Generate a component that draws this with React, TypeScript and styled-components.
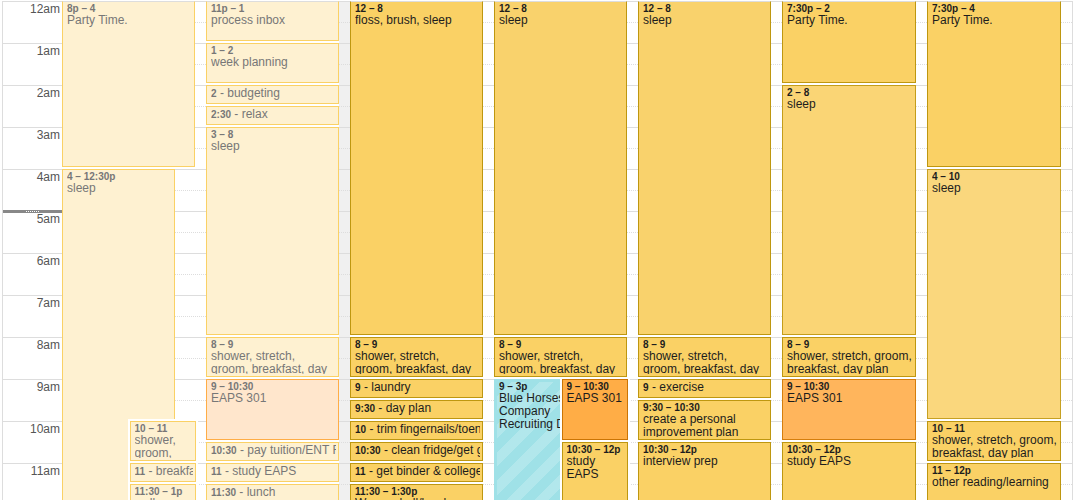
import React from "react";
import styled, { createGlobalStyle, css } from "styled-components";

const GlobalStyle = createGlobalStyle`
  *, *::before, *::after { box-sizing: border-box; }
  html, body, #root { height: 100%; }
  body {
    margin: 0;
    background: #fff;
    font-family: Arial, "Liberation Sans", sans-serif;
    overflow: hidden;
  }
`;

const HALF_HOUR = 21;
const HALF_HOURS_SHOWN = 24;

type Tone = "gold" | "goldSoft" | "goldPale" | "goldLight" | "orange" | "orangeSoft" | "cyan" | "pastGold" | "pastOrange";

const tones: Record<Tone, { fill: string; edge: string; text: string }> = {
  gold: { fill: "#fad165", edge: "#be9710", text: "#1d1d1d" },
  goldSoft: { fill: "#f9d26c", edge: "#be9710", text: "#1d1d1d" },
  goldLight: { fill: "#fad575", edge: "#c49d1a", text: "#1d1d1d" },
  goldPale: { fill: "#fad77d", edge: "#c7a122", text: "#1d1d1d" },
  orange: { fill: "#ffad46", edge: "#cb7403", text: "#1d1d1d" },
  orangeSoft: { fill: "#ffb55c", edge: "#d57e0d", text: "#1d1d1d" },
  cyan: { fill: "#9fe1e7", edge: "#9fe1e7", text: "#1d1d1d" },
  pastGold: { fill: "#fef1d1", edge: "#fad165", text: "#777" },
  pastOrange: { fill: "#ffe6cc", edge: "#ffad46", text: "#777" },
};

type Lane = "full" | "wide" | "left" | "right";

interface CalendarEvent {
  /** Half-hours since midnight. */
  start: number;
  end: number;
  time: string;
  title: string;
  tone: Tone;
  lane?: Lane;
}

const Calendar = styled.main`
  display: grid;
  grid-template-columns: 60px 1fr;
  height: 100%;
  padding: 1px 1px 0 2px;
  overflow: hidden;
`;

const Gutter = styled.ol`
  position: relative;
  margin: 0;
  padding: 0;
  list-style: none;
  border-left: 1px solid #ddd;
`;

const HourLabel = styled.li`
  height: ${HALF_HOUR * 2}px;
  padding-right: 2px;
  border-top: 1px solid #ddd;
  color: #555;
  font-size: 12px;
  line-height: 14px;
  text-align: right;
`;

const NowMarker = styled.div`
  position: absolute;
  top: ${HALF_HOUR * 10 - 1}px;
  left: 0;
  right: 0;
  height: 3px;
  display: flex;
  align-items: center;
  justify-content: center;
  background: #888;
`;

const Grip = styled.span`
  width: 13px;
  border-top: 1px dotted #fff;
`;

const Week = styled.div`
  display: grid;
  grid-template-columns: repeat(5, 144fr) repeat(2, 145fr);
  border-right: 1px solid #ddd;
`;

const Day = styled.section<{ $today?: boolean }>`
  display: grid;
  grid-template-columns: minmax(0, 1fr) minmax(0, 1fr) 11px;
  grid-template-rows: repeat(${HALF_HOURS_SHOWN}, ${HALF_HOUR}px);
  min-width: 0;
  background: ${(p) => (p.$today ? "#f0f0f0" : "#fff")};
  box-shadow: inset 1px 0 #ddd;
`;

const Slot = styled.div<{ $row: number }>`
  grid-column: 1 / -1;
  grid-row: ${(p) => p.$row};
  border-top: 1px ${(p) => (p.$row % 2 ? "solid" : "dotted")} #ddd;
`;

const lanes = {
  full: css`
    grid-column: 1 / 3;
  `,
  wide: css`
    grid-column: 1 / 3;
    width: 85%;
  `,
  left: css`
    grid-column: 1;
    padding-right: 0;
  `,
  right: css`
    grid-column: 2;
    margin-left: 1px;
    margin-right: -1px;
    box-shadow: 0 0 0 2px #fff;
  `,
};

const EventCard = styled.article<{ $start: number; $end: number; $tone: Tone; $lane: Lane }>`
  grid-row: ${(p) => p.$start + 1} / ${(p) => p.$end + 1};
  z-index: 1;
  min-width: 0;
  margin-bottom: 2px;
  padding: 0 2px 2px 4px;
  overflow: hidden;
  border: 1px solid ${(p) => tones[p.$tone].edge};
  border-top-color: ${(p) => (p.$start === 0 ? "#ddd" : tones[p.$tone].edge)};
  background: ${(p) => tones[p.$tone].fill};
  box-shadow: 0 2px #fff;
  color: ${(p) => tones[p.$tone].text};
  ${(p) => lanes[p.$lane]}
  ${(p) =>
    p.$tone === "cyan" &&
    css`
      background: repeating-linear-gradient(
          135deg,
          transparent 0 10px,
          rgba(255, 255, 255, 0.2) 10px 20px
        )
        2px 2px no-repeat #9fe1e7;
    `}
`;

const Clip = styled.div`
  height: 100%;
  overflow: hidden;
`;

const Time = styled.h3`
  margin: 0;
  font-size: 10px;
  line-height: 11px;
  padding-top: 1px;
  white-space: nowrap;
`;

const Title = styled.p`
  margin: 0;
  padding-right: 1px;
  font-size: 12px;
  line-height: 13px;
`;

const ShortLine = styled.p`
  margin: 0;
  font-size: 12px;
  line-height: 14px;
  white-space: nowrap;
  overflow: hidden;

  b {
    font-size: 10px;
  }
`;

const days: CalendarEvent[][] = [
  [
    { start: 0, end: 8, time: "8p – 4", title: "Party Time.", tone: "pastGold" },
    { start: 8, end: 25, time: "4 – 12:30p", title: "sleep", tone: "pastGold", lane: "wide" },
    { start: 20, end: 22, time: "10 – 11", title: "shower, groom,", tone: "pastGold", lane: "right" },
    { start: 22, end: 23, time: "11", title: "breakfast", tone: "pastGold", lane: "right" },
    { start: 23, end: 26, time: "11:30 – 1p", title: "walk", tone: "pastGold", lane: "right" },
  ],
  [
    { start: 0, end: 2, time: "11p – 1", title: "process inbox", tone: "pastGold" },
    { start: 2, end: 4, time: "1 – 2", title: "week planning", tone: "pastGold" },
    { start: 4, end: 5, time: "2", title: "budgeting", tone: "pastGold" },
    { start: 5, end: 6, time: "2:30", title: "relax", tone: "pastGold" },
    { start: 6, end: 16, time: "3 – 8", title: "sleep", tone: "pastGold" },
    { start: 16, end: 18, time: "8 – 9", title: "shower, stretch, groom, breakfast, day plan", tone: "pastGold" },
    { start: 18, end: 21, time: "9 – 10:30", title: "EAPS 301", tone: "pastOrange" },
    { start: 21, end: 22, time: "10:30", title: "pay tuition/ENT Fee", tone: "pastGold" },
    { start: 22, end: 23, time: "11", title: "study EAPS", tone: "pastGold" },
    { start: 23, end: 24, time: "11:30", title: "lunch", tone: "pastGold" },
  ],
  [
    { start: 0, end: 16, time: "12 – 8", title: "floss, brush, sleep", tone: "gold" },
    { start: 16, end: 18, time: "8 – 9", title: "shower, stretch, groom, breakfast, day plan", tone: "gold" },
    { start: 18, end: 19, time: "9", title: "laundry", tone: "gold" },
    { start: 19, end: 20, time: "9:30", title: "day plan", tone: "gold" },
    { start: 20, end: 21, time: "10", title: "trim fingernails/toenails", tone: "gold" },
    { start: 21, end: 22, time: "10:30", title: "clean fridge/get groceries", tone: "gold" },
    { start: 22, end: 23, time: "11", title: "get binder & college", tone: "gold" },
    { start: 23, end: 27, time: "11:30 – 1:30p", title: "Women hall/lunch", tone: "gold" },
  ],
  [
    { start: 0, end: 16, time: "12 – 8", title: "sleep", tone: "goldSoft" },
    { start: 16, end: 18, time: "8 – 9", title: "shower, stretch, groom, breakfast, day plan", tone: "gold" },
    { start: 18, end: 30, time: "9 – 3p", title: "Blue\u00a0Horses Company Recruiting\u00a0Day", tone: "cyan", lane: "left" },
    { start: 18, end: 21, time: "9 – 10:30", title: "EAPS\u00a0301", tone: "orange", lane: "right" },
    { start: 21, end: 24, time: "10:30 – 12p", title: "study EAPS", tone: "gold", lane: "right" },
  ],
  [
    { start: 0, end: 16, time: "12 – 8", title: "sleep", tone: "goldSoft" },
    { start: 16, end: 18, time: "8 – 9", title: "shower, stretch, groom, breakfast, day plan", tone: "gold" },
    { start: 18, end: 19, time: "9", title: "exercise", tone: "gold" },
    { start: 19, end: 21, time: "9:30 – 10:30", title: "create a personal improvement plan", tone: "gold" },
    { start: 21, end: 24, time: "10:30 – 12p", title: "interview prep", tone: "gold" },
  ],
  [
    { start: 0, end: 4, time: "7:30p – 2", title: "Party Time.", tone: "gold" },
    { start: 4, end: 16, time: "2 – 8", title: "sleep", tone: "goldLight" },
    { start: 16, end: 18, time: "8 – 9", title: "shower, stretch, groom, breakfast, day plan", tone: "gold" },
    { start: 18, end: 21, time: "9 – 10:30", title: "EAPS 301", tone: "orangeSoft" },
    { start: 21, end: 24, time: "10:30 – 12p", title: "study EAPS", tone: "gold" },
  ],
  [
    { start: 0, end: 8, time: "7:30p – 4", title: "Party Time.", tone: "gold" },
    { start: 8, end: 20, time: "4 – 10", title: "sleep", tone: "goldPale" },
    { start: 20, end: 22, time: "10 – 11", title: "shower, stretch, groom, breakfast, day plan", tone: "gold" },
    { start: 22, end: 24, time: "11 – 12p", title: "other reading/learning", tone: "gold" },
  ],
];

const TODAY = 1;
const hours = Array.from({ length: 12 }, (_, h) => `${h || 12}am`);
const slots = Array.from({ length: HALF_HOURS_SHOWN }, (_, i) => i + 1);

function EventBlock({ event }: { event: CalendarEvent }) {
  const { start, end, time, title, tone, lane = "full" } = event;
  return (
    <EventCard $start={start} $end={Math.min(end, HALF_HOURS_SHOWN + 1)} $tone={tone} $lane={lane}>
      {end - start === 1 ? (
        <ShortLine>
          <b>{time}</b> - {title}
        </ShortLine>
      ) : (
        <Clip>
          <Time>{time}</Time>
          <Title>{title}</Title>
        </Clip>
      )}
    </EventCard>
  );
}

export default function App() {
  return (
    <>
      <GlobalStyle />
      <Calendar>
        <Gutter>
          {hours.map((hour) => (
            <HourLabel key={hour}>{hour}</HourLabel>
          ))}
          <NowMarker>
            <Grip />
          </NowMarker>
        </Gutter>
        <Week>
          {days.map((events, day) => (
            <Day key={day} $today={day === TODAY}>
              {slots.map((row) => (
                <Slot key={row} $row={row} />
              ))}
              {events.map((event) => (
                <EventBlock key={`${event.start}-${event.title}`} event={event} />
              ))}
            </Day>
          ))}
        </Week>
      </Calendar>
    </>
  );
}
